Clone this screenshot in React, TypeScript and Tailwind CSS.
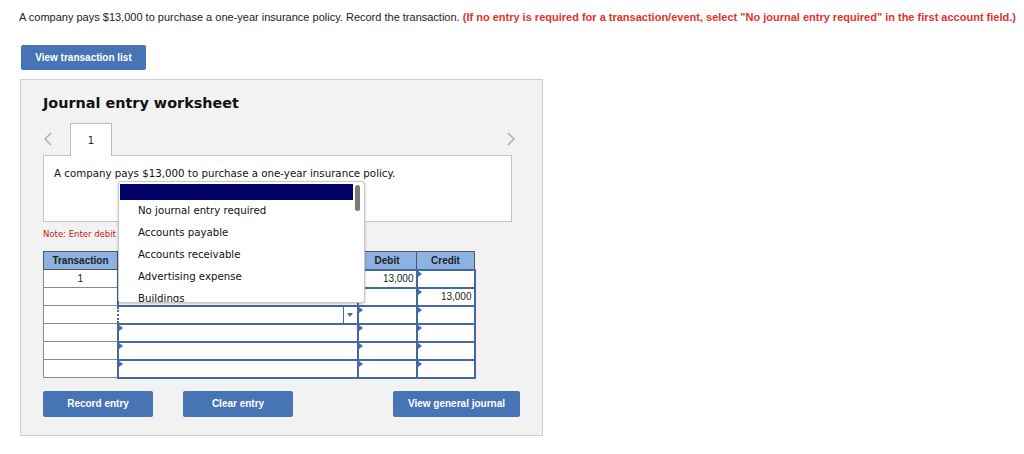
import React from 'react';

const rows = [
  { tr: '1', debit: '13,000', credit: '' },
  { tr: '', debit: '', credit: '13,000' },
  { tr: '', debit: '', credit: '', focus: true },
  { tr: '', debit: '', credit: '' },
  { tr: '', debit: '', credit: '' },
  { tr: '', debit: '', credit: '' },
];

const options = [
  'No journal entry required',
  'Accounts payable',
  'Accounts receivable',
  'Advertising expense',
  'Buildings',
];

const Corner = () => (
  <span className="absolute left-0 top-0 w-0 h-0 border-t-[3px] border-b-[3px] border-l-[4px] border-t-transparent border-b-transparent border-l-[#3f6cb0]" />
);

const InputCell: React.FC<{ value?: string; width: string }> = ({ value, width }) => (
  <td className={`${width} relative border-2 border-[#4468a3] bg-white p-0 h-[18px] text-right pr-[2px] text-[10px] text-[#222]`}>
    <Corner />
    {value}
  </td>
);

const Chevron: React.FC<{ dir: 'left' | 'right' }> = ({ dir }) => (
  <svg width="8" height="14" viewBox="0 0 8 14" className="text-[#a8a8a8]">
    <path
      d={dir === 'left' ? 'M7 1 L1 7 L7 13' : 'M1 1 L7 7 L1 13'}
      fill="none"
      stroke="currentColor"
      strokeWidth="1.3"
    />
  </svg>
);

export default function App() {
  return (
    <div className="relative w-[1024px] h-[454px] bg-white font-['Liberation_Sans',Arial,sans-serif] text-[#222] overflow-hidden">
      <p className="pt-[10px] pl-[19px] text-[11px] leading-[14px] whitespace-nowrap">
        A company pays $13,000 to purchase a one-year insurance policy. Record the transaction.{' '}
        <span className="font-bold text-[#e4322b]">
          (If no entry is required for a transaction/event, select "No journal entry required" in the first account field.)
        </span>
      </p>

      <button className="ml-[21px] mt-[21px] w-[125px] h-[25px] rounded-[2px] bg-[#4674b4] text-white text-[10px] font-bold">
        View transaction list
      </button>

      <div className="relative ml-[20px] mt-[9px] w-[523px] h-[357px] border border-[#cfcfcf] bg-[#f2f2f2] pl-[22px] pt-[14px]">
        <h2 className="font-['DejaVu_Sans',Verdana,sans-serif] font-bold text-[14.4px] leading-[18px] text-[#111]">
          Journal entry worksheet
        </h2>

        <div className="mt-[11px] flex items-end w-[468px] h-[32px]">
          <span className="w-[27px] pl-[1px] pb-[9px]">
            <Chevron dir="left" />
          </span>
          <div className="w-[42px] h-[33px] -mb-[1px] border border-b-0 border-[#bdbdbd] bg-white flex items-center justify-center text-[10px] font-['DejaVu_Sans',sans-serif] relative z-10">
            1
          </div>
          <span className="ml-auto pb-[9px] -mr-[4px]">
            <Chevron dir="right" />
          </span>
        </div>

        <div className="w-[469px] h-[67px] border border-[#c4c4c4] bg-white pl-[10px] pt-[10px] text-[10.25px] font-['DejaVu_Sans',Verdana,sans-serif] text-[#111]">
          A company pays $13,000 to purchase a one-year insurance policy.
        </div>

        <p className="mt-[7px] w-[75px] overflow-hidden whitespace-nowrap text-[8.5px] leading-[11px] text-[#c21a1a] font-['DejaVu_Sans',Verdana,sans-serif]">
          Note: Enter debit
        </p>

        <table className="mt-[11px] border-collapse text-[10px]">
          <thead>
            <tr className="h-[18px]">
              <th className="w-[74px] border border-[#555] bg-[#8db3e2] font-bold p-0">Transaction</th>
              <th className="w-[240px] border border-[#555] bg-[#8db3e2] font-bold p-0"></th>
              <th className="w-[59px] border border-[#555] bg-[#8db3e2] font-bold p-0">Debit</th>
              <th className="w-[58px] border border-[#555] bg-[#8db3e2] font-bold p-0">Credit</th>
            </tr>
          </thead>
          <tbody>
            {rows.map((r, i) => (
              <tr key={i} className="h-[18px]">
                <td className="w-[74px] border border-[#8a8a8a] bg-white text-center p-0 text-[10px]">{r.tr}</td>
                {r.focus ? (
                  <td className="w-[240px] relative bg-white p-0 border-2 border-dotted border-[#3f6cb0]">
                    <span className="absolute right-0 top-0 bottom-0 w-[14px] border-l border-[#3f6cb0] flex items-center justify-center">
                      <span className="w-0 h-0 border-l-[3px] border-r-[3px] border-t-[4px] border-l-transparent border-r-transparent border-t-[#3f6cb0]" />
                    </span>
                  </td>
                ) : (
                  <InputCell width="w-[240px]" />
                )}
                <InputCell width="w-[59px]" value={r.debit} />
                <InputCell width="w-[58px]" value={r.credit} />
              </tr>
            ))}
          </tbody>
        </table>

        <div className="mt-[12px] flex w-[477px]">
          <button className="w-[110px] h-[26px] rounded-[2px] bg-[#4674b4] text-white text-[10px] font-bold">Record entry</button>
          <button className="ml-[30px] w-[110px] h-[26px] rounded-[2px] bg-[#4674b4] text-white text-[10px] font-bold">Clear entry</button>
          <button className="ml-auto w-[127px] h-[26px] rounded-[2px] bg-[#4674b4] text-white text-[10px] font-bold">View general journal</button>
        </div>

        {/* open account dropdown */}
        <div className="absolute left-[97px] top-[101px] w-[247px] h-[122px] bg-white border border-[#c8c8c8] rounded-[3px] shadow-[0_1px_3px_rgba(0,0,0,0.25)] z-20 overflow-hidden">
          <div className="ml-[1px] mt-[2px] w-[233px] h-[16px] bg-[#000066]" />
          <div className="absolute right-[4px] top-[3px] w-[5px] h-[26px] rounded-full bg-[#7a7a7a]" />
          <ul className="pl-[19px] font-['DejaVu_Sans',Verdana,sans-serif] text-[10.2px] text-[#111]">
            {options.map((o) => (
              <li key={o} className="h-[22px] leading-[22px]">{o}</li>
            ))}
          </ul>
        </div>
      </div>
    </div>
  );
}
